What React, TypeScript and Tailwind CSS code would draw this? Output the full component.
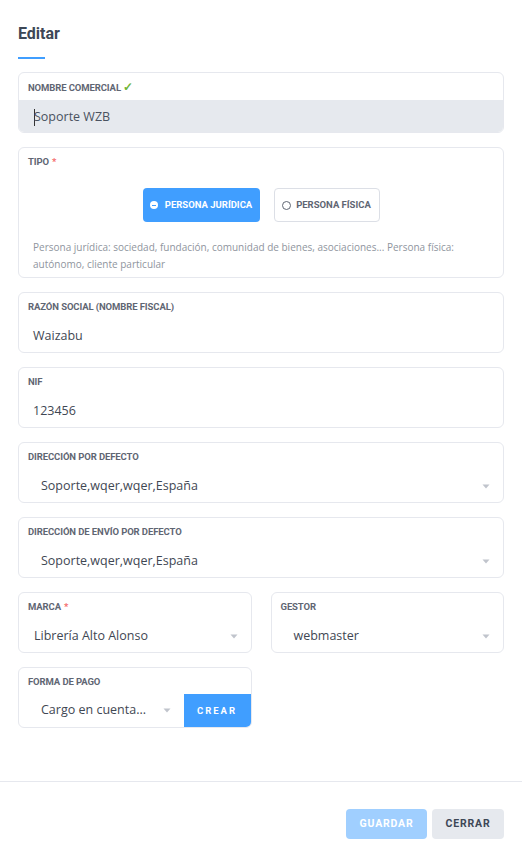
import React from 'react';

const labelFont = { fontFamily: '"Roboto", "Liberation Sans", sans-serif' };
const valueFont = { fontFamily: '"Open Sans", "Noto Sans", sans-serif' };

function Label({ text, required, ok }: { text: string; required?: boolean; ok?: boolean }) {
  return (
    <div
      className="h-[27px] pt-[8px] pl-[9px] text-[9.5px] leading-[12px] font-bold uppercase text-[#5f6673] tracking-[-0.1px]"
      style={labelFont}
    >
      {text}
      {required && <span className="ml-[3px] text-[#f56c6c]">*</span>}
      {ok && <span className="ml-[2px] text-[12px] text-[#6fb536]">✓</span>}
    </div>
  );
}

function Caret() {
  return (
    <svg width="8" height="5" viewBox="0 0 8 5" className="shrink-0">
      <path d="M0.5 0.5 L7.5 0.5 L4 4.5 Z" fill="#c0c4cc" />
    </svg>
  );
}

function Card({ children, className = '' }: { children: React.ReactNode; className?: string }) {
  return (
    <div className={'rounded-[6px] border border-[#e6e8ee] bg-white ' + className}>{children}</div>
  );
}

function TextField({ label, value, pad = 'pl-[14px]' }: { label: string; value: string; pad?: string }) {
  return (
    <Card className="h-[61px]">
      <Label text={label} />
      <div className={'h-[32px] flex items-center text-[12.5px] text-[#3f4753] ' + pad} style={valueFont}>
        {value}
      </div>
    </Card>
  );
}

function SelectField({
  label,
  value,
  required,
  pad = 'pl-[22px]',
  className = '',
}: {
  label: string;
  value: string;
  required?: boolean;
  pad?: string;
  className?: string;
}) {
  return (
    <Card className={'h-[61px] ' + className}>
      <Label text={label} required={required} />
      <div className={'h-[32px] flex items-center justify-between pr-[13px] text-[12.5px] text-[#3f4753] ' + pad} style={valueFont}>
        <span>{value}</span>
        <Caret />
      </div>
    </Card>
  );
}

export default function App() {
  return (
    <div className="w-[522px] h-[851px] bg-white flex flex-col">
      <div className="px-[18px] pt-[24px]">
        <h1 className="text-[16px] leading-[20px] font-bold text-[#3d4756]" style={labelFont}>
          Editar
        </h1>
        <div className="mt-[13px] w-[27px] h-[2px] bg-[#409eff]" />

        <div className="mt-[13px] flex flex-col gap-[14px] w-[486px]">
          {/* nombre comercial */}
          <Card className="h-[61px] overflow-hidden">
            <Label text="Nombre comercial" ok />
            <div className="h-[34px] bg-[#e6e9ee] flex items-center pl-[15px] text-[12.5px] text-[#4a5260]" style={valueFont}>
              <span className="w-px h-[17px] bg-[#333] -mr-px" />
              Soporte WZB
            </div>
          </Card>

          {/* tipo */}
          <Card className="h-[131px]">
            <Label text="Tipo" required />
            <div className="mt-[13px] flex justify-center gap-[14px]">
              <div
                className="w-[117px] h-[34px] rounded-[4px] bg-[#409eff] flex items-center justify-center gap-[7px] text-white text-[9.5px] font-bold uppercase"
                style={labelFont}
              >
                <span className="w-[8px] h-[8px] rounded-full bg-white flex items-center justify-center">
                  <span className="w-[4px] h-px bg-[#409eff]" />
                </span>
                Persona jurídica
              </div>
              <div
                className="w-[106px] h-[34px] rounded-[4px] border border-[#dcdfe6] flex items-center justify-center gap-[5px] text-[#5f6673] text-[9.5px] font-bold uppercase"
                style={labelFont}
              >
                <span className="w-[9px] h-[9px] rounded-full border-[1.5px] border-[#5f6673]" />
                Persona física
              </div>
            </div>
            <p className="mt-[17px] px-[14px] text-[10px] leading-[17px] text-[#8f959e]" style={valueFont}>
              Persona jurídica: sociedad, fundación, comunidad de bienes, asociaciones... Persona física:
              autónomo, cliente particular
            </p>
          </Card>

          <TextField label="Razón social (nombre fiscal)" value="Waizabu" />
          <TextField label="NIF" value="123456" />
          <SelectField label="Dirección por defecto" value="Soporte,wqer,wqer,España" />
          <SelectField label="Dirección de envío por defecto" value="Soporte,wqer,wqer,España" />

          <div className="grid grid-cols-2 gap-[19px]">
            <SelectField label="Marca" value="Librería Alto Alonso" required pad="pl-[15px]" />
            <SelectField label="Gestor" value="webmaster" pad="pl-[22px]" />
          </div>

          <div className="grid grid-cols-2 gap-[19px]">
            <Card className="h-[61px] overflow-hidden flex flex-col">
              <Label text="Forma de pago" />
              <div className="h-[34px] flex">
                <div className="flex-1 flex items-center justify-between pl-[22px] pr-[13px] text-[12.5px] text-[#3f4753]" style={valueFont}>
                  <span>Cargo en cuenta...</span>
                  <Caret />
                </div>
                <div
                  className="w-[67px] bg-[#409eff] text-white text-[9.5px] font-bold tracking-[2px] flex items-center justify-center"
                  style={labelFont}
                >
                  CREAR
                </div>
              </div>
            </Card>
            <div />
          </div>
        </div>
      </div>

      <div className="mt-[53px] h-px bg-[#e6e8ee]" />

      <div className="px-[18px] pt-[27px] flex justify-end gap-[5px]">
        <div
          className="w-[81px] h-[30px] rounded-[4px] bg-[#a0cfff] text-white text-[10.5px] font-bold tracking-[0.8px] flex items-center justify-center"
          style={labelFont}
        >
          GUARDAR
        </div>
        <div
          className="w-[72px] h-[30px] rounded-[4px] bg-[#e6e9ee] text-[#3d4756] text-[10.5px] font-bold tracking-[0.8px] flex items-center justify-center"
          style={labelFont}
        >
          CERRAR
        </div>
      </div>
    </div>
  );
}
